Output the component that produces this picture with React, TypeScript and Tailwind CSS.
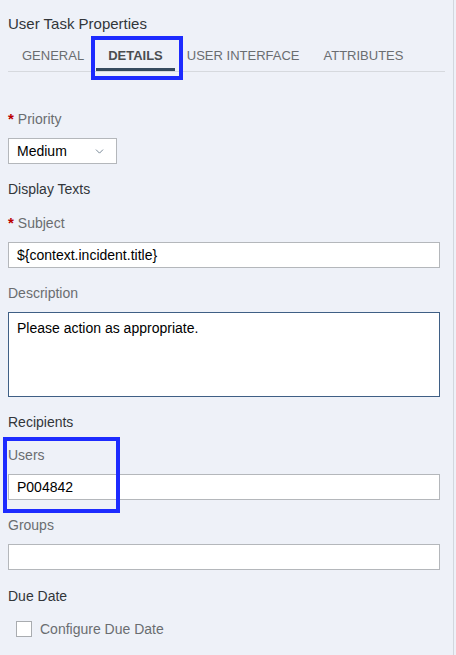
import { ChevronDown } from "lucide-react";

function Label({ text, required, muted }: { text: string; required?: boolean; muted?: boolean }) {
  return (
    <div className={`h-5 leading-5 text-[14px] flex items-center ${muted ? "text-[#6a6d70]" : "text-[#32363a]"}`}>
      {required && <span className="text-[#bb0000] font-bold text-[15px] mr-[4px] leading-5">*</span>}
      {text}
    </div>
  );
}

function TextInput({ value }: { value: string }) {
  return (
    <div className="h-[26px] w-[432px] bg-white border border-[#b4b7bb] flex items-center pl-2 text-[14px] text-[#000]">
      {value}
    </div>
  );
}

function Tab({ label, active }: { label: string; active?: boolean }) {
  return (
    <div
      className={`relative h-full flex items-center px-[12px] text-[13px] ${
        active ? "font-bold text-[#4a4d50] border-b-[3px] border-[#354a5f] pt-[3px]" : "text-[#6a6d70]"
      }`}
    >
      {label}
      {active && (
        <div className="absolute left-[-5px] right-[-8px] top-[-5px] bottom-[-12px] border-4 border-[#1d2bff]" />
      )}
    </div>
  );
}

export default function App() {
  return (
    <div className="min-h-screen w-full bg-[#eef1f8]" style={{ fontFamily: '"Liberation Sans", Arial, sans-serif' }}>
      <div className="w-[454px] h-[655px] border-r border-[#d3d7de] px-2 overflow-hidden">
        <div className="pt-[15px] leading-[18px] text-[15px] text-[#32363a]">User Task Properties</div>

        <div className="mt-[8px] h-[31px] flex items-stretch border-b border-[#d6d9de] pl-[2px]">
          <Tab label="GENERAL" />
          <Tab label="DETAILS" active />
          <Tab label="USER INTERFACE" />
          <Tab label="ATTRIBUTES" />
        </div>

        <div className="mt-[37px]">
          <Label text="Priority" required muted />
        </div>
        <div className="mt-[9px] h-[26px] w-[109px] bg-white border border-[#b4b7bb] flex items-center justify-between pl-2 pr-[10px] text-[14px] text-[#000]">
          <span>Medium</span>
          <ChevronDown size={13} strokeWidth={1.5} className="text-[#5b6e80]" />
        </div>

        <div className="mt-[15px]">
          <Label text="Display Texts" />
        </div>
        <div className="mt-[14px]">
          <Label text="Subject" required muted />
        </div>
        <div className="mt-[9px]">
          <TextInput value="${context.incident.title}" />
        </div>

        <div className="mt-[15px]">
          <Label text="Description" muted />
        </div>
        <div className="mt-[9px] h-[85px] w-[432px] bg-white border border-[#3f5f85] pl-2 pt-[5px] text-[14px] leading-5 text-[#000]">
          Please action as appropriate.
        </div>

        <div className="mt-[15px]">
          <Label text="Recipients" />
        </div>
        <div className="relative mt-[13px]">
          <Label text="Users" muted />
          <div className="mt-[9px]">
            <TextInput value="P004842" />
          </div>
          <div className="absolute left-[-5px] top-[-8px] w-[117px] h-[76px] border-4 border-[#1d2bff]" />
        </div>

        <div className="mt-[15px]">
          <Label text="Groups" muted />
        </div>
        <div className="mt-[9px]">
          <TextInput value="" />
        </div>

        <div className="mt-[16px]">
          <Label text="Due Date" />
        </div>
        <div className="mt-[13px] h-5 flex items-center pl-2 text-[14px] text-[#6a6d70]">
          <div className="w-4 h-4 border-[1.5px] border-[#a9acb0] bg-white mr-2" />
          Configure Due Date
        </div>
      </div>
    </div>
  );
}
